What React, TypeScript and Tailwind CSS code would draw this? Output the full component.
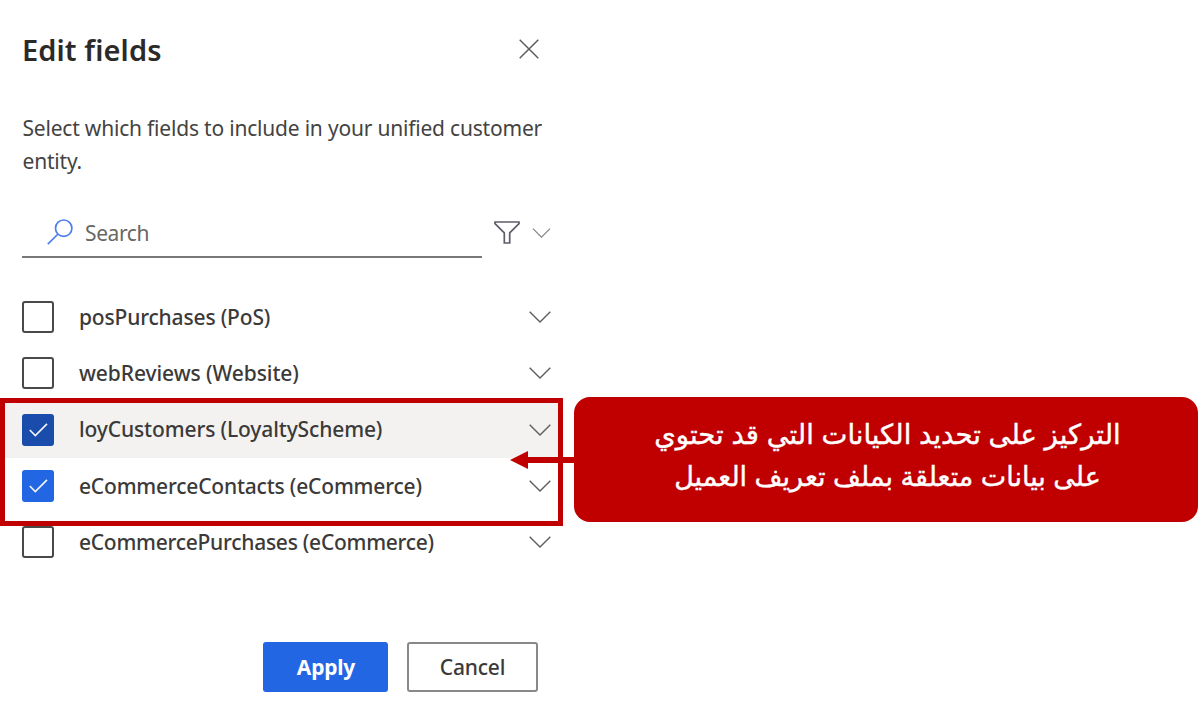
const rows = [
  { label: 'posPurchases (PoS)', box: 'border-2 border-[#4a4948] bg-white', bg: '', checked: false, text: 'tracking-[-0.17px]' },
  { label: 'webReviews (Website)', box: 'border-2 border-[#4a4948] bg-white', bg: '', checked: false, text: 'tracking-[-0.08px]' },
  { label: 'loyCustomers (LoyaltyScheme)', box: 'bg-[#1a4cab]', bg: 'bg-[#f3f2f1]', checked: true, text: 'tracking-[-0.13px]' },
  { label: 'eCommerceContacts (eCommerce)', box: 'bg-[#2266e3]', bg: '', checked: true, text: 'tracking-[-0.19px]' },
  { label: 'eCommercePurchases (eCommerce)', box: 'border-2 border-[#4a4948] bg-white', bg: '', checked: false, text: 'tracking-[-0.26px]' },
];

function Chevron({ className }: { className: string }) {
  return (
    <svg className={className} viewBox="0 0 22 12" fill="none" stroke="currentColor" strokeWidth="1.4">
      <path d="M0.7 0.7 L11 11 L21.3 0.7" />
    </svg>
  );
}

function Row({ row }: { row: (typeof rows)[number] }) {
  return (
    <li className={`flex h-[56.25px] items-center pl-[22px] pr-3 ${row.bg}`}>
      <span className={`flex size-8 shrink-0 items-center justify-center rounded-[3px] ${row.box}`}>
        {row.checked && (
          <svg className="h-[14px] w-[19px]" viewBox="0 0 19 14" fill="none" stroke="#f1f3f8" strokeWidth="1.7">
            <path d="M0.8 7 L6.3 12.5 L18 0.9" />
          </svg>
        )}
      </span>
      <span className={`ml-[25px] grow whitespace-nowrap pt-px text-[21px] font-medium text-[#3b3a39] ${row.text}`}>{row.label}</span>
      <Chevron className="h-3 w-[22px] shrink-0 text-[#605e5c]" />
    </li>
  );
}

export default function App() {
  return (
    <main className="relative h-[709px] w-[1198px] overflow-hidden bg-white font-['Noto_Sans',sans-serif] text-[#323130]">
      <section className="flex h-full w-[563px] flex-col">
        <header className="flex h-[97px] items-center justify-between pl-[22px] pr-6">
          <h1 className="pt-[2px] text-[29px] font-semibold leading-none tracking-[0.1px] text-[#2b2a29]">Edit fields</h1>
          <svg className="size-[20px]" viewBox="0 0 20 20" fill="none" stroke="#605e5c" strokeWidth="1.5">
            <path d="M0.7 0.7 L19.3 19.3 M19.3 0.7 L0.7 19.3" />
          </svg>
        </header>
        <p className="mt-[15px] whitespace-nowrap pl-[22.5px] text-[21px] leading-[33px] tracking-[-0.2px] text-[#444342]">
          Select which fields to include in your unified customer
          <br />
          entity.
        </p>
        <div className="mt-[30px] flex h-[50px] pl-[22px]">
          <div className="flex w-[460px] items-center border-b-2 border-[#7a7877] pl-[25px]">
            <svg className="size-[26px] text-[#4f7ef0]" viewBox="0 0 26 26" fill="none" stroke="currentColor" strokeWidth="1.7">
              <circle cx="16.7" cy="9.2" r="8.2" />
              <path d="M11 15 L0.8 25.2" />
            </svg>
            <span className="ml-3 pt-[3px] text-[21px] tracking-[-0.4px] text-[#686664]">Search</span>
          </div>
          <svg className="ml-3 mt-[13px] h-[23px] w-[26px]" viewBox="0 0 26 23" fill="none" stroke="#5f5c68" strokeWidth="1.7">
            <path d="M1 1 H25 V2.6 L15.7 11.8 V22 H10.3 V11.8 L1 2.6 Z" />
          </svg>
          <Chevron className="ml-3 mt-5 h-[10px] w-[19px] text-[#85837f]" />
        </div>
        <ul className="mt-[31px]">
          {rows.map((row) => (
            <Row key={row.label} row={row} />
          ))}
        </ul>
        <footer className="mt-[72px] flex gap-[19px] pl-[263px]">
          <button className="h-[50px] w-[125px] rounded-[3px] bg-[#2266e3] pl-px text-[21px] font-bold tracking-[-0.2px] text-white">Apply</button>
          <button className="h-[50px] w-[131px] rounded-[3px] border-2 border-[#8a8886] bg-white text-[21px] font-medium tracking-[-0.2px] text-[#3b3a39]">
            Cancel
          </button>
        </footer>
      </section>

      <div className="absolute left-0 top-[398px] h-[128px] w-[563px] border-[5px] border-[#c00000]" />
      <svg className="absolute left-[510px] top-[451px] h-[18px] w-[66px]" viewBox="0 0 66 18" fill="#c00000">
        <path d="M0 9 L18 0 V6 H66 V12 H18 V18 Z" />
      </svg>
      <aside
        dir="rtl"
        lang="ar"
        className="absolute left-[574px] top-[397px] flex h-[125px] w-[624px] flex-col items-center justify-center whitespace-nowrap rounded-[16px] bg-[#c00000] pb-[7px] pl-[3px] font-['Liberation_Sans','DejaVu_Sans',sans-serif] text-[27.5px] leading-[42px] text-white [-webkit-text-stroke:0.4px_white]"
      >
        <span>التركيز على تحديد الكيانات التي قد تحتوي</span>
        <span className="text-[27px]">على بيانات متعلقة بملف تعريف العميل</span>
      </aside>
    </main>
  );
}
